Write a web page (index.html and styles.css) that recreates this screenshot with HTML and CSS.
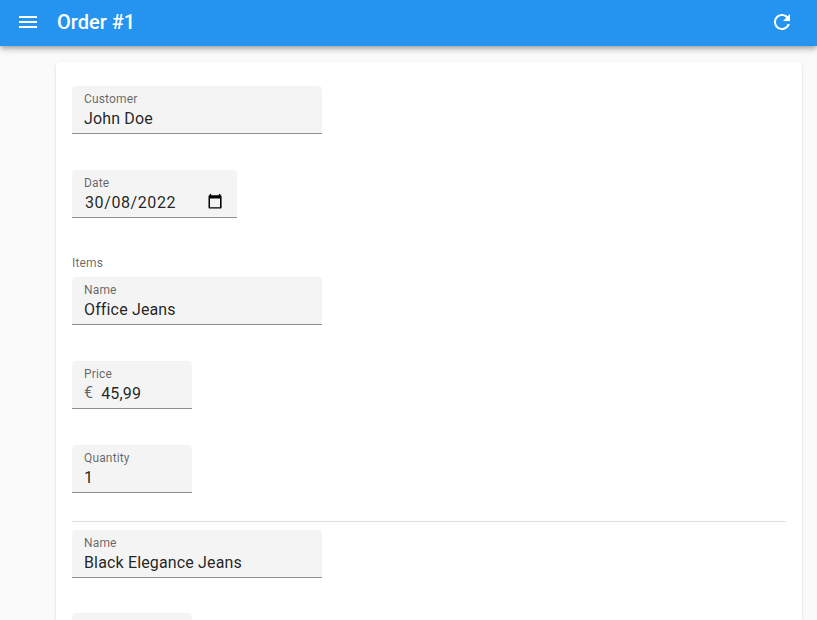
FILE: index.html
```html
<!DOCTYPE html>
<html lang="en">
<head>
<meta charset="utf-8">
<title>Order #1</title>
<link rel="stylesheet" href="styles.css">
</head>
<body>
<header class="appbar">
  <svg class="icon" viewBox="0 0 24 24"><path d="M3 18h18v-2H3v2zm0-5h18v-2H3v2zm0-7v2h18V6H3z"/></svg>
  <h1 class="title">Order #1</h1>
  <svg class="icon" viewBox="0 0 24 24"><path d="M17.65 6.35C16.2 4.9 14.21 4 12 4c-4.42 0-7.99 3.58-7.99 8s3.57 8 7.99 8c3.73 0 6.84-2.55 7.73-6h-2.08c-.82 2.33-3.04 4-5.65 4-3.31 0-6-2.69-6-6s2.69-6 6-6c1.66 0 3.14.69 4.22 1.78L13 11h7V4l-2.35 2.35z"/></svg>
</header>
<main class="card">
  <div class="field wide"><span class="label">Customer</span><span class="value">John Doe</span></div>
  <div class="field date"><span class="label">Date</span><span class="value"><span class="day">30/08/2022</span><svg class="calendar" viewBox="0 0 14 15"><path fill-rule="evenodd" d="M1.7 1.3V0h1.4v1.3h7.8V0h1.4v1.3h.2q1.1 0 1.1 1.1v11q0 1.1-1.1 1.1h-11Q.5 14.500.5 13.400v-11q0-1.1 1.1-1.1zM2 4.500V13.200h10V4.500z"/></svg></span></div>
  <section class="items">
    <h2 class="caption">Items</h2>
    <div class="item">
      <div class="field wide"><span class="label">Name</span><span class="value">Office Jeans</span></div>
      <div class="field"><span class="label">Price</span><span class="value"><span class="currency">€</span>45,99</span></div>
      <div class="field"><span class="label">Quantity</span><span class="value">1</span></div>
    </div>
    <div class="item">
      <div class="field wide"><span class="label">Name</span><span class="value">Black Elegance Jeans</span></div>
      <div class="field"></div>
    </div>
  </section>
</main>
</body>
</html>
```
FILE: styles.css
```css
* { box-sizing: border-box; }
html { height: 100%; overflow: hidden; }
body {
  display: flex;
  flex-direction: column;
  margin: 0;
  height: 100%;
  overflow: hidden;
  background: #fafafa;
  color: rgba(0, 0, 0, 0.87);
  font-family: Roboto, sans-serif;
  font-size: 16px;
  letter-spacing: 0.15px;
}
.appbar {
  position: relative;
  flex: none;
  display: flex;
  align-items: center;
  height: 46px;
  padding: 0 23px 2px 16px;
  background: #2593f0;
  color: #fff;
  box-shadow: 0 2px 4px -1px rgba(0,0,0,.2), 0 4px 5px rgba(0,0,0,.14), 0 1px 10px rgba(0,0,0,.12);
}
.icon { width: 24px; height: 24px; fill: currentColor; }
.title { flex: 1; margin: 0 0 0 17px; font-size: 20px; line-height: 32px; font-weight: 500; letter-spacing: 0; }
.card {
  flex: 1;
  min-height: 0;
  overflow: hidden;
  margin: 16px 15px 0 56px;
  padding: 24px 16px 0;
  border-radius: 4px 4px 0 0;
  background: #fff;
  box-shadow: 0 2px 1px -1px rgba(0,0,0,.2), 0 1px 1px rgba(0,0,0,.14), 0 1px 3px rgba(0,0,0,.12);
}
.field {
  display: flex;
  flex-direction: column;
  width: 120px;
  height: 48px;
  margin-bottom: 36px;
  padding: 6px 12px 0;
  border-bottom: 1px solid #909090;
  border-radius: 4px 4px 0 0;
  background: #f4f4f4;
}
.wide { width: 250px; }
.date { width: 165px; }
.label, .caption { font-size: 12px; line-height: 14px; font-weight: 400; color: rgba(0,0,0,.6); }
.value { display: flex; align-items: center; height: 26px; line-height: 26px; white-space: nowrap; }
.day { flex: 1; padding-left: 1px; letter-spacing: .6px; }
.calendar { width: 14px; height: 15px; margin: 0 3px 3px 0; fill: #000; }
.currency { margin-right: 8px; padding-bottom: 2px; line-height: 24px; color: rgba(0,0,0,.6); }
.items { padding-top: 2px; }
.caption { margin: 0 0 7px; }
.item + .item { margin-top: -8px; padding-top: 8px; border-top: 1px solid #e0e0e0; }
.item + .item .wide { margin-bottom: 35px; }
```
